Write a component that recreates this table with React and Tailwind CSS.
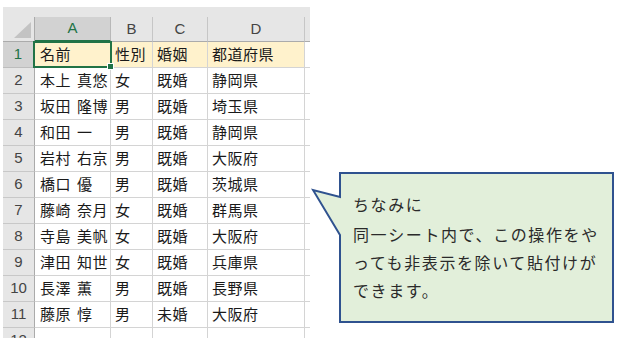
import React from "react";

const rows = [
  ["名前", "性別", "婚姻", "都道府県"],
  ["本上 真悠", "女", "既婚", "静岡県"],
  ["坂田 隆博", "男", "既婚", "埼玉県"],
  ["和田 一", "男", "既婚", "静岡県"],
  ["岩村 右京", "男", "既婚", "大阪府"],
  ["橋口 優", "男", "既婚", "茨城県"],
  ["藤崎 奈月", "女", "既婚", "群馬県"],
  ["寺島 美帆", "女", "既婚", "大阪府"],
  ["津田 知世", "女", "既婚", "兵庫県"],
  ["長澤 薫", "男", "既婚", "長野県"],
  ["藤原 惇", "男", "未婚", "大阪府"],
  ["", "", "", ""],
];

const colWidths = ["w-[76px]", "w-[42px]", "w-[55px]", "w-[97px]"];
const letters = ["A", "B", "C", "D"];

const cjk = { fontFamily: '"Noto Sans CJK JP", "Noto Sans", sans-serif' };

function Name({ text }) {
  const parts = text.split(" ");
  if (parts.length < 2) return text;
  return (
    <>
      {parts[0]}
      <span className="inline-block w-[6px]" />
      {parts[1]}
    </>
  );
}

function HeaderRow() {
  return (
    <div className="flex h-[25px] bg-[#e6e6e6] font-['Liberation_Sans',sans-serif] text-[15px] text-[#444]">
      <div className="w-[32px] shrink-0 border-r border-b border-[#ababab] flex items-end justify-end pr-[3px] pb-[3px]">
        <svg width="17" height="16" viewBox="0 0 17 16">
          <polygon points="17,0 17,16 0,16" fill="#c3c3c3" />
        </svg>
      </div>
      {letters.map((l, i) => (
        <div
          key={l}
          className={`${colWidths[i]} shrink-0 flex items-center justify-center border-r ${
            i === 0
              ? "bg-[#d2d2d2] text-[#217346] border-r-[#b8b8b8] border-b-2 border-b-[#217346]"
              : "border-r-[#c6c6c6] border-b border-b-[#ababab]"
          }`}
        >
          {l}
        </div>
      ))}
      <div className="w-[5px] shrink-0 border-b border-[#ababab]" />
    </div>
  );
}

function DataRow({ cells, index }) {
  const selected = index === 0;
  return (
    <div className="flex h-[26px] shrink-0">
      <div
        className={`w-[32px] shrink-0 flex items-center justify-center border-r border-b font-['Liberation_Sans',sans-serif] text-[15px] ${
          selected
            ? "bg-[#d2d2d2] text-[#217346] border-r-[#217346] border-r-2 border-b-[#bdbdbd]"
            : "bg-[#e6e6e6] text-[#444] border-r-[#ababab] border-b-[#c8c8c8]"
        }`}
      >
        {index + 1}
      </div>
      {cells.map((c, i) => (
        <div
          key={i}
          style={cjk}
          className={`${colWidths[i]} shrink-0 overflow-hidden whitespace-nowrap flex items-center pl-[4px] border-r border-b border-[#d4d4d4] text-[15px] tracking-[0.5px] text-[#1a1a1a] ${
            selected ? "bg-[#fff2cc]" : "bg-white"
          } ${i === 0 ? "pl-[5px]" : ""}`}
        >
          {i === 0 ? <Name text={c} /> : c}
        </div>
      ))}
      <div className="w-[5px] shrink-0 border-b border-[#d4d4d4] bg-white" />
    </div>
  );
}

function Callout() {
  return (
    <div className="absolute left-[311px] top-[171px] w-[304px] h-[153px]">
      <svg
        className="absolute inset-0"
        width="304"
        height="153"
        viewBox="311 171 304 153"
      >
        <path
          d="M340 173 H613 V322 H340 V235 L313 190 L340 197 Z"
          fill="#e2efda"
          stroke="#2f528f"
          strokeWidth="2"
          strokeLinejoin="miter"
        />
      </svg>
      <div
        style={cjk}
        className="absolute left-[42px] top-[19px] flex flex-col text-[16px] leading-[28px] tracking-[1.6px] text-[#2a2a2a] whitespace-nowrap"
      >
        <div className="mb-[2px]">ちなみに</div>
        <div>同一シート内で、この操作をや</div>
        <div>っても非表示を除いて貼付けが</div>
        <div>できます。</div>
      </div>
    </div>
  );
}

export default function App() {
  return (
    <div className="relative w-[624px] h-[344px] bg-white overflow-hidden">
      <div className="ml-[3px] mt-[7px] w-[307px] h-[331px] overflow-hidden flex flex-col relative">
        <div className="h-[10px] shrink-0 bg-[#e6e6e6]" />
        <HeaderRow />
        {rows.map((r, i) => (
          <DataRow key={i} cells={r} index={i} />
        ))}
        {/* active cell outline with fill handle */}
        <div className="absolute left-[30px] top-[34px] w-[79px] h-[27px] border-2 border-[#217346]">
          <div className="absolute right-[-4px] bottom-[-4px] w-[7px] h-[7px] bg-[#217346] border border-white" />
        </div>
      </div>
      <Callout />
    </div>
  );
}
